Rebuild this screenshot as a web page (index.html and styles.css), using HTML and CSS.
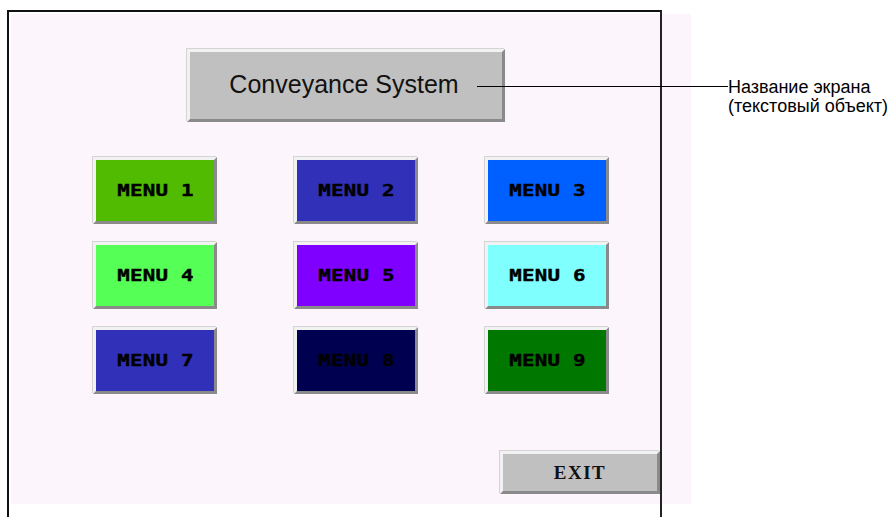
FILE: index.html
```html
<!DOCTYPE html>
<html lang="en">
<head>
    <meta charset="UTF-8">
    <meta name="viewport" content="width=device-width, initial-scale=1.0">
    <title>Conveyance System</title>
    <link rel="stylesheet" href="styles.css">
</head>
<body>
    <div class="stage">
        <div class="panel">
            <div class="title">Conveyance System</div>

            <div class="menuGrid">
                <div class="cell"><button class="menuBtn m1"><span>MENU 1</span></button></div>
                <div class="cell"><button class="menuBtn m2"><span>MENU 2</span></button></div>
                <div class="cell"><button class="menuBtn m3"><span>MENU 3</span></button></div>
                <div class="cell"><button class="menuBtn m4"><span>MENU 4</span></button></div>
                <div class="cell"><button class="menuBtn m5"><span>MENU 5</span></button></div>
                <div class="cell"><button class="menuBtn m6"><span>MENU 6</span></button></div>
                <div class="cell"><button class="menuBtn m7"><span>MENU 7</span></button></div>
                <div class="cell"><button class="menuBtn m8"><span>MENU 8</span></button></div>
                <div class="cell"><button class="menuBtn m9"><span>MENU 9</span></button></div>
            </div>

            <button class="exitBtn">EXIT</button>
        </div>

        <!-- screen outline and annotation drawn over the panel -->
        <div class="frame"></div>
        <div class="callLine"></div>
        <div class="callText">Название экрана<br>(текстовый объект)</div>
    </div>
</body>
</html>
```

FILE: styles.css
```css
* {
    box-sizing: border-box;
}
body {
    margin: 0;
    padding: 0;
    background-color: #fff;
    font-family: "Liberation Sans", Arial, sans-serif;
    overflow: hidden;
}
.stage {
    position: relative;
    width: 890px;
    height: 517px;
    padding: 14px 0 0 11px;
}
.panel {
    width: 680px;
    height: 490px;
    background-color: #fcf5fc;
    padding: 35px 0 0 176px;
}
.title {
    width: 318px;
    height: 73px;
    background-color: #c0c0c0;
    border: 3px solid;
    border-color: #f2f2f2 #8a8a8a #8a8a8a #f2f2f2;
    box-shadow: -1px -1px 0 #d4d4d4;
    display: flex;
    align-items: center;
    justify-content: center;
    font-size: 25px;
    color: #111;
    padding: 0 4px 2px 0;
}
.menuGrid {
    display: grid;
    grid-template-columns: 201px 191px 124px;
    grid-auto-rows: 67px;
    row-gap: 18px;
    margin: 35px 0 0 -94px;
}
.menuBtn {
    width: 124px;
    height: 67px;
    padding: 0;
    border: 3px solid;
    border-color: #f2f2f2 #8a8a8a #8a8a8a #f2f2f2;
    box-shadow: -1px -1px 0 #d4d4d4;
    display: flex;
    align-items: center;
    justify-content: center;
    cursor: pointer;
}
.menuBtn span {
    display: inline-block;
    font-family: "DejaVu Sans Mono", "Liberation Mono", monospace;
    font-weight: bold;
    font-size: 16px;
    letter-spacing: 0.2px;
    color: #000;
    white-space: pre;
    transform: scaleX(1.3);
    -webkit-text-stroke: 0.4px #000;
}
.m1 { background-color: #50bb00; }
.m2 { background-color: #3030b8; }
.m3 { background-color: #0060ff; }
.m4 { background-color: #55ff55; }
.m5 { background-color: #8000ff; }
.m6 { background-color: #80ffff; }
.m7 { background-color: #3030b8; }
.m8 { background-color: #000050; }
.m9 { background-color: #007800; }
.exitBtn {
    display: block;
    width: 160px;
    height: 43px;
    margin: 57px 0 0 313px;
    padding: 0;
    background-color: #c0c0c0;
    border: 3px solid;
    border-color: #f2f2f2 #8a8a8a #8a8a8a #f2f2f2;
    box-shadow: -1px -1px 0 #d4d4d4;
    font-family: "Liberation Serif", "Times New Roman", serif;
    font-weight: bold;
    font-size: 19px;
    letter-spacing: 1.5px;
    color: #111;
    cursor: pointer;
}
.frame {
    position: absolute;
    left: 7px;
    top: 10px;
    width: 655px;
    height: 520px;
    border-left: 2px solid #111;
    border-top: 2px solid #111;
    border-right: 2px solid #222;
    pointer-events: none;
}
.callLine {
    position: absolute;
    left: 477px;
    top: 86px;
    width: 251px;
    height: 1px;
    background-color: #000;
}
.callText {
    position: absolute;
    left: 728px;
    top: 78px;
    font-size: 18px;
    line-height: 19px;
    color: #000;
    white-space: nowrap;
}
```
